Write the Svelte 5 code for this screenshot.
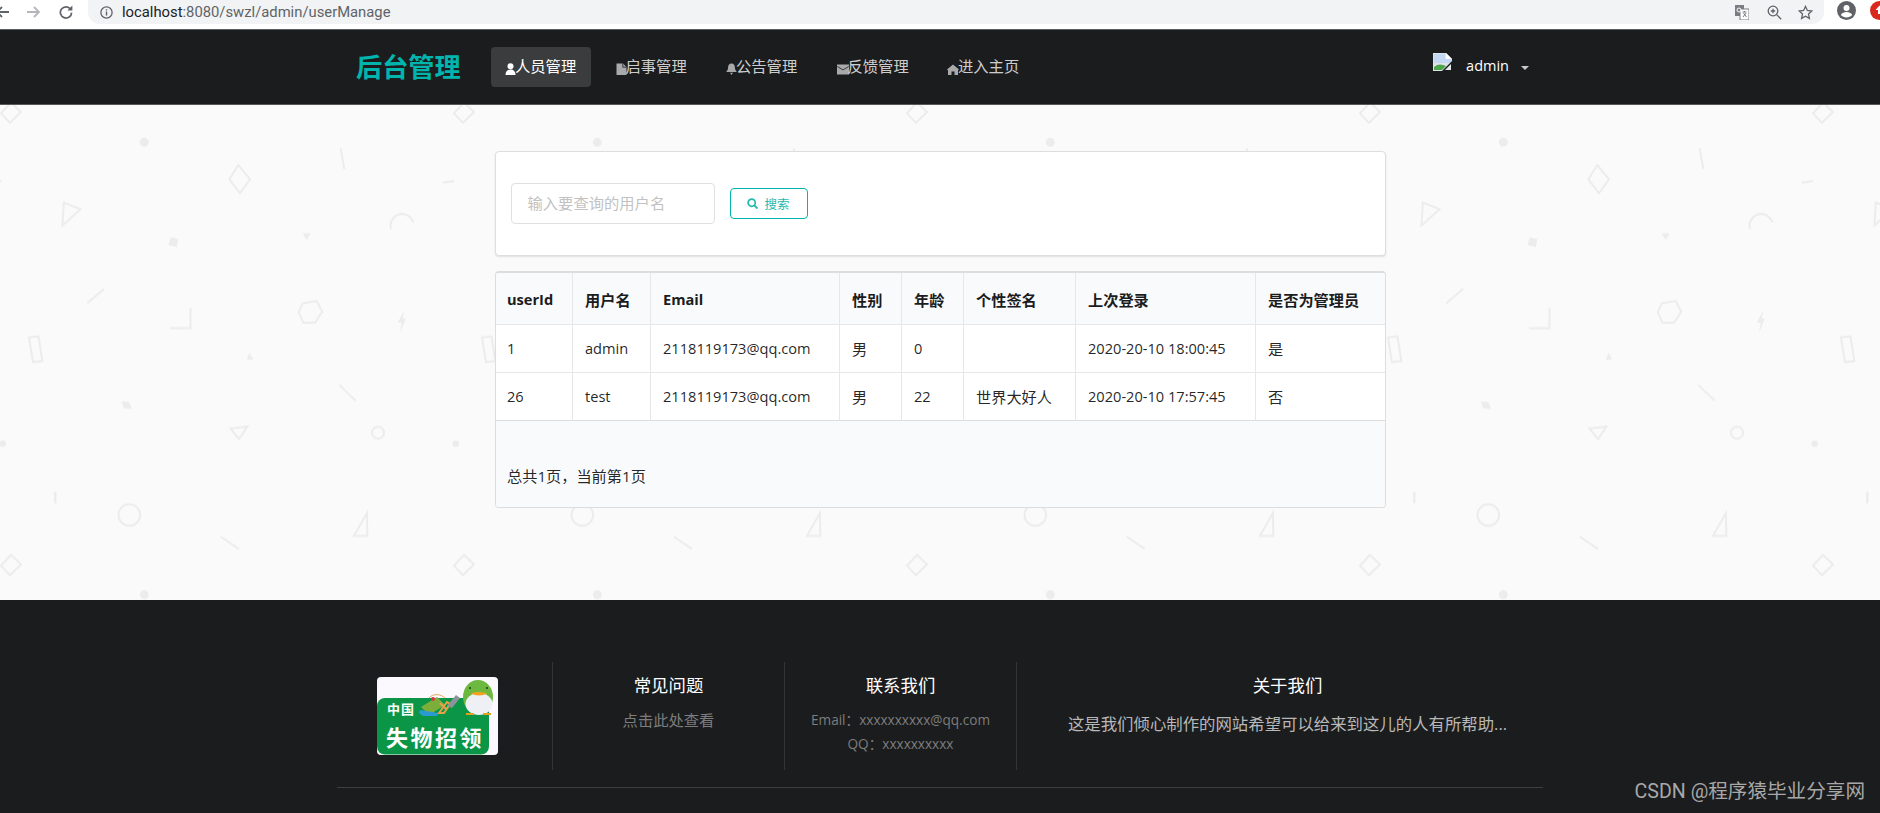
<script>
  const columns = [
    { label: 'userId', key: 'id' },
    { label: '用户名', key: 'name', zh: true },
    { label: 'Email', key: 'email' },
    { label: '性别', key: 'sex', zh: true },
    { label: '年龄', key: 'age', zh: true },
    { label: '个性签名', key: 'sign', zh: true },
    { label: '上次登录', key: 'last', zh: true },
    { label: '是否为管理员', key: 'admin', zh: true }
  ];
  const rows = [
    { id: '1', name: 'admin', email: '2118119173@qq.com', sex: '男', age: '0', sign: '', last: '2020-20-10 18:00:45', admin: '是' },
    { id: '26', name: 'test', email: '2118119173@qq.com', sex: '男', age: '22', sign: '世界大好人', last: '2020-20-10 17:57:45', admin: '否' }
  ];
  const isZh = (s) => /[^\x00-\x7f]/.test(s);
</script>

<div class="page">
  <div class="chrome">
    <div class="nav-btns">
      <svg class="back" width="12" height="14" viewBox="0 0 12 14"><path d="M9 7H-3M2 2L-3 7l5 5" fill="none" stroke="#5f6368" stroke-width="1.8"/></svg>
      <svg class="fwd" width="14" height="14" viewBox="0 0 14 14"><path d="M0 7h12M7 2l5 5-5 5" fill="none" stroke="#b4b6b9" stroke-width="1.8"/></svg>
      <svg class="reload" width="14" height="14" viewBox="0 0 14 14"><path d="M11.6 4.2A5.6 5.6 0 1 0 12.6 7.6" fill="none" stroke="#5f6368" stroke-width="1.7"/><path d="M13.4 0.6v5h-5z" fill="#5f6368"/></svg>
    </div>
    <div class="omnibox">
      <svg class="info" width="13" height="13" viewBox="0 0 13 13"><circle cx="6.5" cy="6.5" r="5.6" fill="none" stroke="#5f6368" stroke-width="1.3"/><path d="M6.5 5.6v4M6.5 3.2v1.3" stroke="#5f6368" stroke-width="1.4"/></svg>
      <span class="url"><span class="host">localhost</span>:8080/swzl/admin/userManage</span>
      <span class="omni-space"></span>
      <svg width="14" height="15" viewBox="0 0 14 15"><rect x="0" y="0" width="9" height="11" fill="#7a7d81"/><rect x="5" y="4" width="9" height="11" fill="#fff" stroke="#7a7d81"/><path d="M7.5 7h4M9.5 6v1M8 12l3-4M8.5 8l3 4" stroke="#7a7d81" fill="none"/><circle cx="4" cy="5" r="2" fill="none" stroke="#fff"/></svg>
      <svg class="zoomi" width="15" height="15" viewBox="0 0 15 15"><circle cx="6" cy="6" r="4.8" fill="none" stroke="#5f6368" stroke-width="1.3"/><path d="M9.6 9.6l4.6 4.6M6 3.8v4.4M3.8 6h4.4" stroke="#5f6368" stroke-width="1.3"/></svg>
      <svg class="star" width="15" height="15" viewBox="0 0 15 15"><path d="M7.5 1.4l1.9 4.1 4.4.5-3.3 3 .9 4.4-3.9-2.2-3.9 2.2.9-4.4-3.3-3 4.4-.5z" fill="none" stroke="#5f6368" stroke-width="1.3"/></svg>
    </div>
    <svg class="profile" width="19" height="19" viewBox="0 0 19 19"><circle cx="9.5" cy="9.5" r="9.5" fill="#5f6368"/><circle cx="9.5" cy="7" r="3" fill="#fff"/><path d="M3.8 14c1.2-2.2 3.4-3 5.7-3s4.500.8 5.700 3c-1.400 1.500-3.500 2.400-5.700 2.400S5.200 15.500 3.800 14z" fill="#fff"/></svg>
    <svg class="ext" width="12" height="19" viewBox="0 0 12 19"><circle cx="9.500" cy="9.500" r="9.500" fill="#d9281e"/><path d="M9.500 4.500l-4 4.500h2.500v4h3V9h2.500z" fill="#fff"/></svg>
  </div>

  <header class="topbar">
    <div class="topbar-inner">
      <h1 class="brand">后台管理</h1>
      <nav class="menu">
        <a class="item active" href="#users">
          <svg width="11" height="12" viewBox="0 0 11 12"><circle cx="5.500" cy="3.200" r="3" fill="currentColor"/><path d="M0.500 12c0-3.500 2-5.500 5-5.500s5 2 5 5.500z" fill="currentColor"/></svg>
          人员管理
        </a>
        <a class="item" href="#notices">
          <svg width="11" height="12" viewBox="0 0 11 12"><path d="M0.500 0.500h6.500l3.500 3.500v8h-10z" fill="currentColor"/><path d="M6.800 0.500v3.700h3.700" fill="none" stroke="#1b1c1e" stroke-width="0.800"/></svg>
          启事管理
        </a>
        <a class="item" href="#bulletin">
          <svg width="11" height="12" viewBox="0 0 11 12"><path d="M5.500 0.500c2.400 0 3.300 1.800 3.400 3.800.1 2.200.8 3.600 2 4.700H0.100c1.200-1.100 1.900-2.500 2-4.700.1-2 1-3.800 3.400-3.800z" fill="currentColor"/><path d="M4 9.800h3L5.500 12z" fill="currentColor"/></svg>
          公告管理
        </a>
        <a class="item" href="#feedback">
          <svg width="12" height="12" viewBox="0 0 12 12"><rect y="1.500" width="12" height="10" fill="currentColor"/><path d="M0.300 3.500l5.700 3.400 5.700-3.400" fill="none" stroke="#1b1c1e" stroke-width="0.800"/></svg>
          反馈管理
        </a>
        <a class="item" href="#home">
          <svg width="12" height="12" viewBox="0 0 12 12"><path d="M0 6.500L6 1.500l6 5-1 .8V12H7.500V8.500h-3V12H1V7.300z" fill="currentColor"/></svg>
          进入主页
        </a>
      </nav>
      <div class="user">
        <svg class="broken" width="19" height="18" viewBox="0 0 19 18">
          <path d="M0 0h13l6 6v12H0z" fill="#dfe3e8"/>
          <path d="M1 1h11v5h6v4H1z" fill="#c4d7f3"/>
          <path d="M13 0l6 6h-6z" fill="#fff"/>
          <path d="M1 17v-3c3-3 7-3 9-2l3 1-4 4z" fill="#4da64a"/>
          <path d="M9 18l10-10v10z" fill="#1b1c1e"/>
          <path d="M12 17l6-6v6z" fill="#e6e9ec"/>
        </svg>
        <span class="uname">admin</span>
        <span class="caret"></span>
      </div>
    </div>
  </header>

  <main class="content">
    <svg class="pattern" aria-hidden="true" width="100%" height="100%">
      <defs>
        <pattern id="shapes" x="-1" y="-5" width="453" height="452.400" patternUnits="userSpaceOnUse">
          <g transform="translate(1 -100)" fill="none" stroke="#ececec" stroke-width="2">
            <path d="M11 102.500L21 112 10 122.800 1 113.300z"/>
            <path d="M238.300 165L250 179.300 240 193.300 229.300 179.300z"/>
            <path d="M340.700 148.300L344.300 169"/>
            <path d="M442.700 182.700L454.300 181M-10.300 182.700L1.300 181"/>
            <path d="M63.800 202.500L80.500 209.300 62.500 225.500z"/>
            <path d="M391 229A11.500 11.500 0 0 1 413.300 222.300"/>
            <path d="M87.300 303.300L104 289"/>
            <path d="M170 328.300H190.500V307.700"/>
            <path d="M302.700 303.300L316.700 301 322.300 311.700 315 322.700 303.300 322.700 298.700 312.300z"/>
            <path d="M29 337.500L38.500 336.300 42.300 361 33 362.200z"/>
            <path d="M339.300 385L355.700 400.700"/>
            <path d="M230.500 428.500L247.500 426.500 239 439z"/>
            <circle cx="378" cy="432.700" r="6"/>
            <path d="M55.300 491.700V503.300" stroke-width="2.500"/>
            <circle cx="129.300" cy="515" r="10.800"/>
            <path d="M220.700 536.700L239 549"/>
            <path d="M367 513L367.300 535.800 354 535.800z"/>
            <g fill="#ececec" stroke="none">
              <circle cx="144.300" cy="142.300" r="4.500"/>
              <circle cx="2.700" cy="443.700" r="3.200"/>
              <path d="M170.700 237.300L178.300 239 176.700 247 168.300 245z"/>
              <path d="M302.700 233.300H310.700L306.700 240z"/>
              <path d="M404.300 310L402.700 319 406 318.300 400 333.300 401.700 322.700 397.700 322.700z"/>
              <path d="M249.300 352.300L253.300 359.300 247 360z"/>
              <path d="M121.700 401.300L129.300 402 132 409 124 408.300z"/>
            </g>
          </g>
        </pattern>
      </defs>
      <rect width="100%" height="100%" fill="url(#shapes)"/>
    </svg>

    <div class="column">
      <section class="search">
        <input class="search-input" type="text" placeholder="输入要查询的用户名" />
        <button class="search-btn" type="button">
          <svg width="11" height="11" viewBox="0 0 11 11"><circle cx="4.700" cy="4.700" r="3.600" fill="none" stroke="currentColor" stroke-width="1.700"/><path d="M7.300 7.300L10.500 10.500" stroke="currentColor" stroke-width="1.900"/></svg>
          搜索
        </button>
      </section>

      <table class="users">
        <thead>
          <tr>
            {#each columns as c}
              <th class:zh={c.zh}>{c.label}</th>
            {/each}
          </tr>
        </thead>
        <tbody>
          {#each rows as r}
            <tr>
              {#each columns as c}
                <td class:zh={isZh(r[c.key])}>{r[c.key]}</td>
              {/each}
            </tr>
          {/each}
        </tbody>
        <tfoot>
          <tr><td class="zh" colspan="8">总共1页，当前第1页</td></tr>
        </tfoot>
      </table>
    </div>
  </main>

  <footer class="footer">
    <div class="footer-grid">
      <div class="f-col logo-col">
        <svg class="logo" width="121" height="78" viewBox="0 0 121 78">
          <rect width="121" height="78" rx="4" fill="#fbf9fd"/>
          <rect x="0" y="21" width="112" height="56.500" rx="8" fill="#0b9647"/>
          <path d="M44 30l16-10 8 8-16 10z" fill="#7cae3c"/>
          <path d="M43 33l18 3-1 3-14 0-4-3z" fill="#2a9ad3"/>
          <path d="M52 21c4-5 12-4 16 0" fill="none" stroke="#e8a75b" stroke-width="1"/>
          <circle cx="56" cy="22" r="2" fill="#d8343a"/>
          <path d="M62 36l8-11 3 2-6 9zM63 26l6 6" stroke="#e4a349" stroke-width="2" fill="none"/>
          <path d="M70 29l9-11 4 3-8 10z" fill="#8d9499"/>
          <text class="logo-small" x="10" y="37">中国</text>
          <text class="logo-big" x="9" y="69">失物招领</text>
          <ellipse cx="101" cy="20" rx="15" ry="17" fill="#6db83f"/>
          <ellipse cx="102" cy="27" rx="13.500" ry="11" fill="#eef0f6"/>
          <path d="M94 16.500c3-2 12-2 16 0-4 2.500-12 2.500-16 0z" fill="#f1a21e"/>
          <circle cx="93" cy="11" r="1" fill="#1c3d17"/>
          <circle cx="110" cy="11" r="1" fill="#1c3d17"/>
          <path d="M89 36h8v2h-8zM106 36h8v2h-8z" fill="#e3a11f"/>
        </svg>
      </div>
      <div class="f-col">
        <h4>常见问题</h4>
        <p class="muted">点击此处查看</p>
      </div>
      <div class="f-col">
        <h4>联系我们</h4>
        <p class="muted small">Email：xxxxxxxxxx@qq.com</p>
        <p class="muted small">QQ：xxxxxxxxxx</p>
      </div>
      <div class="f-col about">
        <h4>关于我们</h4>
        <p class="light">这是我们倾心制作的网站希望可以给来到这儿的人有所帮助...</p>
      </div>
    </div>
    <div class="rule"></div>
    <div class="watermark">CSDN @程序猿毕业分享网</div>
  </footer>
</div>

<style>
  :global(body) {
    margin: 0;
    background: #fff;
  }
  .page {
    width: 1880px;
    height: 813px;
    overflow: hidden;
    display: flex;
    flex-direction: column;
    font-family: "Open Sans", "Noto Sans CJK SC", sans-serif;
    font-size: 14.6px;
    color: rgba(0, 0, 0, 0.87);
  }

  .chrome {
    height: 29px;
    flex: none;
    box-sizing: border-box;
    background: #fff;
    display: flex;
    align-items: flex-start;
    position: relative;
    overflow: hidden;
  }
  .nav-btns {
    width: 88px;
    height: 24px;
    flex: none;
    display: flex;
    align-items: center;
  }
  .fwd { margin-left: 15px; }
  .reload { margin-left: 18px; }
  .omnibox {
    width: 1736px;
    height: 24px;
    flex: none;
    box-sizing: border-box;
    background: #f1f3f4;
    border-radius: 0 0 12px 12px;
    display: flex;
    align-items: center;
    padding: 0 11px 0 12px;
    color: #5f6368;
  }
  .info { margin-right: 9px; }
  .url {
    font-family: "Roboto", sans-serif;
    font-size: 14.8px;
    white-space: nowrap;
  }
  .host { color: #202124; }
  .omni-space { flex: 1; }
  .zoomi { margin-left: 18px; }
  .star { margin-left: 16px; }
  .profile { margin-left: 13px; margin-top: 1px; flex: none; }
  .ext { margin-left: 14px; margin-top: 1px; flex: none; }

  .topbar {
    height: 76px;
    flex: none;
    box-sizing: border-box;
    background: #1b1c1e;
    border-top: 1px solid #5b5c5e;
    border-bottom: 1px solid #56575a;
  }
  .topbar-inner {
    width: 1206px;
    height: 100%;
    margin: 0 auto;
    box-sizing: border-box;
    padding: 0 14px 0 19px;
    display: flex;
    align-items: center;
  }
  .brand {
    margin: 0 29px 0 0;
    width: 106px;
    font-size: 26.2px;
    line-height: 36px;
    font-weight: 700;
    color: #00b5ad;
    white-space: nowrap;
  }
  .menu {
    display: flex;
    gap: 10.5px;
    margin-top: -1px;
  }
  .item {
    height: 40px;
    box-sizing: border-box;
    width: 100px;
    padding: 0 0 4px 14px;
    border-radius: 4px;
    display: flex;
    align-items: center;
    font-size: 15.3px;
    color: rgba(255, 255, 255, 0.8);
    text-decoration: none;
    white-space: nowrap;
  }
  .item svg {
    flex: none;
    margin-top: 8px;
    margin-right: -1px;
    color: #a9a9a9;
  }
  .item.active {
    background: #3b3c3e;
    color: #fff;
  }
  .item.active svg { color: #fff; }
  .user {
    margin-left: auto;
    display: flex;
    align-items: center;
    color: #fff;
    font-size: 14.5px;
    margin-top: -4px;
  }
  .broken {
    margin-top: -7px;
    margin-right: 14px;
    margin-left: 1px;
  }
  .caret {
    width: 0;
    height: 0;
    margin-left: 12px;
    margin-top: 5px;
    border-left: 4px solid transparent;
    border-right: 4px solid transparent;
    border-top: 4px solid #c9c9c9;
  }

  .content {
    position: relative;
    flex: none;
    background: #fafafa;
    padding: 46px 0 92px;
  }
  .pattern {
    position: absolute;
    inset: 0;
    display: block;
  }
  .column {
    position: relative;
    width: 891px;
    margin: 0 auto;
    display: flex;
    flex-direction: column;
    gap: 15px;
  }
  .search {
    height: 105px;
    box-sizing: border-box;
    background: #fff;
    border: 1px solid #dededf;
    border-radius: 4px;
    box-shadow: 0 1px 2px rgba(34, 36, 38, 0.12);
    padding: 30px 15px 31px;
    display: flex;
    align-items: center;
    gap: 15px;
  }
  .search-input {
    width: 204px;
    height: 41px;
    box-sizing: border-box;
    border: 1px solid #dfe0e1;
    border-radius: 4px;
    padding: 0 16px;
    font-family: inherit;
    font-size: 15.3px;
    background: #fff;
    outline: none;
  }
  .search-input::placeholder { color: #c2c2c2; opacity: 1; }
  .search-btn {
    width: 78px;
    height: 31px;
    box-sizing: border-box;
    background: #fff;
    border: 1px solid #00b5ad;
    border-radius: 4px;
    color: #1fb9b1;
    font-family: inherit;
    font-size: 12.5px;
    font-weight: 400;
    padding: 0;
    display: flex;
    align-items: center;
    justify-content: center;
    gap: 6px;
  }

  .users {
    width: 891px;
    table-layout: fixed;
    border-collapse: separate;
    border-spacing: 0;
    background: #fff;
    border: 1px solid #dcdddf;
    border-top-width: 2px;
    border-radius: 4px;
    overflow: hidden;
  }
  th, td {
    box-sizing: border-box;
    padding: 0 12px 0 12.5px;
    text-align: left;
    white-space: nowrap;
    border-right: 1px solid #e6e7e8;
    border-bottom: 1px solid #e6e7e8;
    font-size: 14.6px;
  }
  th:first-child, td:first-child { padding-left: 11.5px; }
  th.zh, td.zh { font-size: 15.2px; }
  th:last-child, td:last-child { border-right: 0; }
  th {
    height: 52px;
    background: #f9fafb;
    font-weight: 700;
    color: #1b1c1d;
  }
  tbody td { height: 48px; padding-bottom: 2px; }
  tbody tr:last-child td { border-bottom-color: #dcdddf; }
  th:nth-child(1) { width: 77px; }
  th:nth-child(2) { width: 78px; }
  th:nth-child(3) { width: 189px; }
  th:nth-child(4) { width: 62px; }
  th:nth-child(5) { width: 62px; }
  th:nth-child(6) { width: 112px; }
  th:nth-child(7) { width: 180px; }
  th:nth-child(8) { width: 129px; }
  tfoot td {
    height: 86px;
    background: #f9fafb;
    border-bottom: 0;
    padding-top: 22px;
  }

  .footer {
    flex: 1;
    position: relative;
    background: #1b1c1e;
    padding-top: 62px;
  }
  .footer-grid {
    width: 1206px;
    margin: 0 auto;
    height: 108px;
    display: grid;
    grid-template-columns: 216px 232px 232px 526px;
  }
  .f-col {
    box-sizing: border-box;
    text-align: center;
    border-right: 1px solid #333436;
    padding-top: 11px;
  }
  .f-col:last-child { border-right: 0; }
  .about { padding-left: 15px; }
  .logo-col {
    padding: 15px 14px 0 0;
  }
  .logo { display: block; margin: 0 auto; }
  .logo-small {
    font-family: "Noto Sans CJK SC", sans-serif;
    font-size: 13px;
    font-weight: 700;
    fill: #fff;
    letter-spacing: 1px;
  }
  .logo-big {
    font-family: "Noto Sans CJK SC", sans-serif;
    font-size: 22px;
    font-weight: 700;
    letter-spacing: 2.5px;
    fill: #fff;
  }
  h4 {
    margin: 0 0 11px;
    font-size: 17.4px;
    line-height: 24px;
    font-weight: 400;
    color: #fff;
  }
  p { margin: 0; }
  .muted {
    color: #7d7d7d;
    font-size: 15.3px;
    line-height: 24px;
  }
  .muted.small { font-size: 13.6px; }
  .light {
    color: #b8b8b8;
    font-size: 16.4px;
    line-height: 24px;
    margin-top: 15px;
  }
  .rule {
    width: 1206px;
    margin: 17px auto 0;
    height: 1px;
    background: #3d3e40;
  }
  .watermark {
    position: absolute;
    right: 15px;
    top: 178px;
    font-family: "Roboto", "Noto Sans CJK SC", sans-serif;
    font-size: 19.6px;
    line-height: 28px;
    color: #a8a8a8;
    white-space: nowrap;
  }
</style>
